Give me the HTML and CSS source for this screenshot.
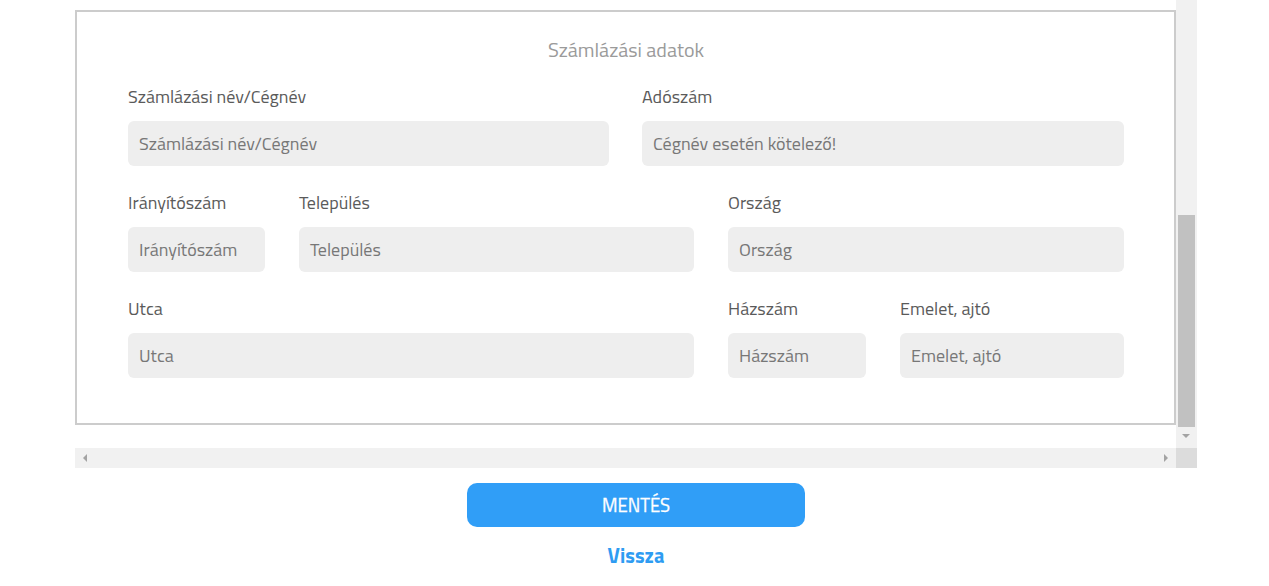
FILE: index.html
```html
<!DOCTYPE html>
<html lang="hu">
<head>
<meta charset="utf-8">
<link rel="stylesheet" href="styles.css">
</head>
<body>
<div class="page">
  <div class="scroller">
    <div class="view">
      <div class="viewport">
        <div class="card">
          <div class="title">Számlázási adatok</div>
          <div class="row row1">
            <div class="field"><label>Számlázási név/Cégnév</label><div class="input">Számlázási név/Cégnév</div></div>
            <div class="field"><label>Adószám</label><div class="input">Cégnév esetén kötelező!</div></div>
          </div>
          <div class="row row2">
            <div class="field"><label>Irányítószám</label><div class="input">Irányítószám</div></div>
            <div class="field"><label>Település</label><div class="input">Település</div></div>
            <div class="field"><label>Ország</label><div class="input">Ország</div></div>
          </div>
          <div class="row row3">
            <div class="field"><label>Utca</label><div class="input">Utca</div></div>
            <div class="field"><label>Házszám</label><div class="input">Házszám</div></div>
            <div class="field"><label>Emelet, ajtó</label><div class="input">Emelet, ajtó</div></div>
          </div>
        </div>
      </div>
      <div class="vbar">
        <div class="vtrack"><div class="vthumb"></div></div>
        <div class="arrow-down"></div>
      </div>
    </div>
    <div class="hbar">
      <div class="htrack">
        <span class="arrow-left"></span>
        <span class="arrow-right"></span>
      </div>
      <div class="corner"></div>
    </div>
  </div>
  <div class="actions">
    <button class="save">MENTÉS</button>
    <a class="back">Vissza</a>
  </div>
</div>
</body>
</html>
```
FILE: styles.css
```css
html, body { margin: 0; padding: 0; background: #fff; }
body { font-family: "Titillium Web", Roboto, "Liberation Sans", sans-serif; }
.page { width: 1122px; margin-left: 75px; }
.scroller { width: 1122px; height: 468px; display: flex; flex-direction: column; }
.view { display: flex; height: 448px; }
.viewport { width: 1101px; padding-top: 10px; box-sizing: border-box; }
.card {
  border: 2px solid #cccccc;
  height: 415px;
  box-sizing: border-box;
  padding: 25px 50px 0 51px;
}
.title { text-align: center; color: #9a9a9a; font-size: 20px; line-height: 26px; margin-bottom: 24px; }
.row { display: grid; gap: 34px; margin-bottom: 27px; }
.row1 { grid-template-columns: 481px 1fr; gap: 33px; }
.row2 { grid-template-columns: 137px 395px 1fr; }
.row3 { grid-template-columns: 566px 138px 1fr; margin-bottom: 0; }
.field label { display: block; color: #5a5a5a; font-size: 18px; line-height: 20px; margin-bottom: 14px; }
.input {
  height: 45px; background: #eeeeee; border-radius: 6px;
  color: #777; font-size: 18px; line-height: 45px; padding-left: 11px;
  white-space: nowrap; overflow: hidden;
}
.vbar { width: 21px; background: #f1f1f1; display: flex; flex-direction: column; }
.vtrack { flex: 1; display: flex; flex-direction: column; justify-content: flex-end; padding: 0 2px; }
.vthumb { height: 212px; background: #c1c1c1; margin-bottom: 1px; }
.arrow-down { height: 20px; position: relative; }
.arrow-down::after {
  content: ""; position: absolute; left: 6px; top: 6px;
  border-left: 4px solid transparent; border-right: 4px solid transparent; border-top: 4px solid #a3a3a3;
}
.hbar { display: flex; height: 20px; }
.htrack { flex: 1; background: #f1f1f1; position: relative; }
.arrow-left, .arrow-right { position: absolute; top: 6px; width: 0; height: 0; border-top: 4px solid transparent; border-bottom: 4px solid transparent; }
.arrow-left { left: 8px; border-right: 4px solid #a3a3a3; }
.arrow-right { right: 8px; border-left: 4px solid #a3a3a3; }
.corner { width: 21px; background: #dcdcdc; }
.actions { display: flex; flex-direction: column; align-items: center; padding-top: 15px; }
.save {
  width: 338px; height: 44px; border: 0; border-radius: 10px;
  background: #309ef7; color: #fff; font-family: inherit; font-size: 18.5px; font-weight: 400;
  -webkit-text-stroke: 0.3px #fff;
}
.back { color: #2e9cf2; font-weight: bold; font-size: 20.5px; margin-top: 17px; line-height: 24px; }
```
